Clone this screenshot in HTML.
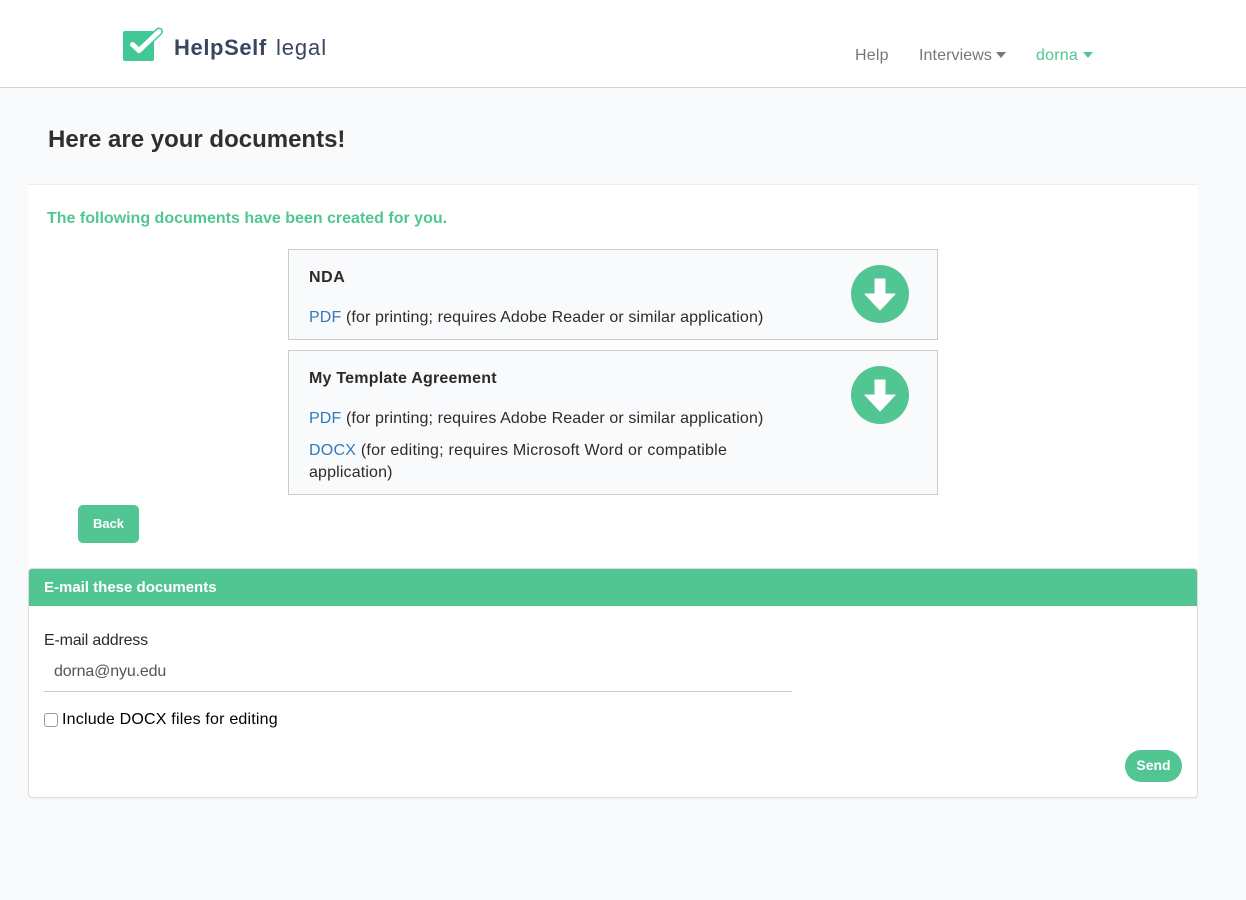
<!DOCTYPE html>
<html><head><meta charset="utf-8"><title>HelpSelf legal</title>
<style>
html,body{margin:0;padding:0;width:1246px;height:900px;overflow:hidden;background:#f9fafc;font-family:"Liberation Sans",sans-serif;color:#2b2b2b}
.a{position:absolute;box-sizing:border-box}
.t{position:absolute;white-space:nowrap;font-size:16px;line-height:22px}
a{color:#337ab7;text-decoration:none}
.box{position:absolute;left:288px;width:650px;background:#f9fafc;border:1px solid #ccc;box-sizing:border-box}
</style></head><body>
<div class="a" style="left:0;top:0;width:1246px;height:88px;background:#fff;border-bottom:1px solid #d4d4d4"></div>
<svg class="a" style="left:120px;top:24px" width="46" height="40" viewBox="0 0 46 40">
<rect x="3" y="7" width="31" height="30" rx="2" fill="#41c896"/>
<path d="M12.500 20.500L19 26.500L39 7.500" fill="none" stroke="#41c896" stroke-width="8" stroke-linecap="round" stroke-linejoin="round"/>
<path d="M12.500 20.500L19 26.500L39 7.500" fill="none" stroke="#fff" stroke-width="5" stroke-linecap="round" stroke-linejoin="round"/>
</svg>
<div class="t" style="left:174px;top:36px;font-size:22px;line-height:24px;font-weight:bold;color:#3a4560;letter-spacing:.6px">HelpSelf</div>
<div class="t" style="left:276px;top:36px;font-size:22px;line-height:24px;color:#3a4560;letter-spacing:.9px">legal</div>
<div class="t" style="left:855px;top:45px;color:#777;letter-spacing:.2px">Help</div>
<div class="t" style="left:919px;top:45px;color:#777;letter-spacing:.1px">Interviews</div>
<div class="a" style="left:996px;top:52px;border:5px solid transparent;border-top:6px solid #777;border-bottom:0"></div>
<div class="t" style="left:1036px;top:45px;color:#51c692;letter-spacing:.2px">dorna</div>
<div class="a" style="left:1083px;top:52px;border:5px solid transparent;border-top:6px solid #51c692;border-bottom:0"></div>

<div class="t" style="left:48px;top:125px;font-size:24px;line-height:30px;font-weight:bold;color:#2f2f2f">Here are your documents!</div>
<div class="a" style="left:28px;top:184px;width:1170px;height:385px;background:#fff;border-top:1px solid #eee"></div>
<div class="t" style="left:47px;top:208px;font-weight:bold;color:#51c692">The following documents have been created for you.</div>

<div class="box" style="top:249px;height:91px"></div>
<div class="t" style="left:309px;top:267px;font-weight:bold;letter-spacing:.6px">NDA</div>
<div class="t" style="left:309px;top:307px;letter-spacing:.125px"><a>PDF</a> (for printing; requires Adobe Reader or similar application)</div>
<svg class="a" style="left:851px;top:265px" width="58" height="58" viewBox="0 0 58 58"><circle cx="29" cy="29" r="29" fill="#51c692"/><path d="M24 14H34V29H44L29 45L14 29H24Z" fill="#fff" stroke="#fff" stroke-width="1" stroke-linejoin="round"/></svg>

<div class="box" style="top:350px;height:145px"></div>
<div class="t" style="left:309px;top:368px;font-weight:bold;letter-spacing:.22px">My Template Agreement</div>
<div class="t" style="left:309px;top:408px;letter-spacing:.125px"><a>PDF</a> (for printing; requires Adobe Reader or similar application)</div>
<div class="t" style="left:309px;top:440px;letter-spacing:.23px"><a>DOCX</a> (for editing; requires Microsoft Word or compatible</div>
<div class="t" style="left:309px;top:462px;letter-spacing:.15px">application)</div>
<svg class="a" style="left:851px;top:366px" width="58" height="58" viewBox="0 0 58 58"><circle cx="29" cy="29" r="29" fill="#51c692"/><path d="M24 14H34V29H44L29 45L14 29H24Z" fill="#fff" stroke="#fff" stroke-width="1" stroke-linejoin="round"/></svg>

<div class="a" style="left:78px;top:505px;width:61px;height:38px;background:#51c692;border-radius:5px"></div>
<div class="t" style="left:78px;top:513px;width:61px;text-align:center;font-size:13px;font-weight:bold;color:#fff">Back</div>

<div class="a" style="left:28px;top:568px;width:1170px;height:230px;background:#fff;border:1px solid #ddd;border-radius:4px;box-shadow:0 1px 1px rgba(0,0,0,.05)"></div>
<div class="a" style="left:29px;top:569px;width:1168px;height:37px;background:#51c692;border-radius:3px 3px 0 0"></div>
<div class="t" style="left:44px;top:577px;color:#fff;font-weight:bold;font-size:15px">E-mail these documents</div>
<div class="t" style="left:44px;top:630px;letter-spacing:-.2px">E-mail address</div>
<div class="t" style="left:54px;top:661px;color:#555;letter-spacing:-.15px">dorna@nyu.edu</div>
<div class="a" style="left:44px;top:691px;width:748px;height:1px;background:#ccc"></div>
<div class="a" style="left:44px;top:713px;width:14px;height:14px;background:#fff;border:1px solid #999;border-radius:3px"></div>
<div class="t" style="left:62px;top:709px;color:#000;letter-spacing:.2px">Include DOCX files for editing</div>
<div class="a" style="left:1125px;top:750px;width:57px;height:32px;background:#51c692;border-radius:16px"></div>
<div class="t" style="left:1125px;top:754px;width:57px;text-align:center;font-size:14px;font-weight:bold;color:#fff">Send</div>
</body></html>
